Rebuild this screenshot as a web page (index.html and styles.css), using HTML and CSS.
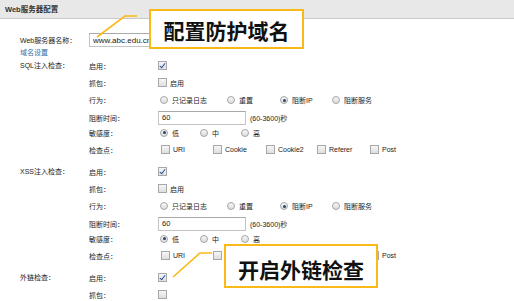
FILE: index.html
```html
<!DOCTYPE html>
<html lang="zh-CN">
<head>
  <meta charset="UTF-8">
  <title>Web服务器配置</title>
  <link rel="stylesheet" href="styles.css">
</head>
<body>
  <div class="page">
    <div class="panel-head">Web服务器配置</div>

    <div class="panel-body">
      <div class="name-row">
        <span class="lbl1">Web服务器名称：</span>
        <input type="text" class="txt url" value="www.abc.edu.cn">
      </div>
      <a class="domain-link" href="#">域名设置</a>

      <!-- SQL -->
      <div class="group">
        <div class="group-title">SQL注入检查：</div>
        <div class="group-rows">
          <div class="row r-enable"><span class="lbl2">启用：</span><span class="cb on"></span></div>
          <div class="row r-capture"><span class="lbl2">抓包：</span><span class="opt"><span class="cb"></span>启用</span></div>
          <div class="row r-action"><span class="lbl2">行为：</span>
            <div class="opts action">
              <span class="opt"><span class="rd"></span>只记录日志</span>
              <span class="opt"><span class="rd"></span>重置</span>
              <span class="opt"><span class="rd on"></span>阻断IP</span>
              <span class="opt"><span class="rd"></span>阻断服务</span>
            </div>
          </div>
          <div class="row r-time"><span class="lbl2">阻断时间：</span><input type="text" class="txt time" value="60"><span class="unit">(60-3600)秒</span></div>
          <div class="row r-sens"><span class="lbl2">敏感度：</span>
            <div class="opts sens">
              <span class="opt"><span class="rd on"></span>低</span>
              <span class="opt"><span class="rd"></span>中</span>
              <span class="opt"><span class="rd"></span>高</span>
            </div>
          </div>
          <div class="row r-points"><span class="lbl2">检查点：</span>
            <div class="opts points">
              <span class="opt"><span class="cb"></span>URI</span>
              <span class="opt"><span class="cb"></span>Cookie</span>
              <span class="opt"><span class="cb"></span>Cookie2</span>
              <span class="opt"><span class="cb"></span>Referer</span>
              <span class="opt"><span class="cb"></span>Post</span>
            </div>
          </div>
        </div>
      </div>

      <!-- XSS -->
      <div class="group">
        <div class="group-title">XSS注入检查：</div>
        <div class="group-rows">
          <div class="row r-enable"><span class="lbl2">启用：</span><span class="cb on"></span></div>
          <div class="row r-capture"><span class="lbl2">抓包：</span><span class="opt"><span class="cb"></span>启用</span></div>
          <div class="row r-action"><span class="lbl2">行为：</span>
            <div class="opts action">
              <span class="opt"><span class="rd"></span>只记录日志</span>
              <span class="opt"><span class="rd"></span>重置</span>
              <span class="opt"><span class="rd on"></span>阻断IP</span>
              <span class="opt"><span class="rd"></span>阻断服务</span>
            </div>
          </div>
          <div class="row r-time"><span class="lbl2">阻断时间：</span><input type="text" class="txt time" value="60"><span class="unit">(60-3600)秒</span></div>
          <div class="row r-sens"><span class="lbl2">敏感度：</span>
            <div class="opts sens">
              <span class="opt"><span class="rd on"></span>低</span>
              <span class="opt"><span class="rd"></span>中</span>
              <span class="opt"><span class="rd"></span>高</span>
            </div>
          </div>
          <div class="row r-points"><span class="lbl2">检查点：</span>
            <div class="opts points">
              <span class="opt"><span class="cb"></span>URI</span>
              <span class="opt"><span class="cb"></span>Cookie</span>
              <span class="opt"><span class="cb"></span>Cookie2</span>
              <span class="opt"><span class="cb"></span>Referer</span>
              <span class="opt"><span class="cb"></span>Post</span>
            </div>
          </div>
        </div>
      </div>

      <!-- 外链 -->
      <div class="group">
        <div class="group-title">外链检查：</div>
        <div class="group-rows">
          <div class="row r-enable"><span class="lbl2">启用：</span><span class="cb on"></span></div>
          <div class="row r-capture"><span class="lbl2">抓包：</span><span class="cb"></span></div>
        </div>
      </div>
    </div>

    <!-- 标注 -->
    <svg class="leaders" width="514" height="301" viewBox="0 0 514 301">
      <polyline points="97,37 125,16 137,16" />
      <polyline points="173,277 200,253 212,253" />
    </svg>
    <div class="callout callout-domain">配置防护域名</div>
    <div class="callout callout-link">开启外链检查</div>
  </div>
</body>
</html>
```

FILE: styles.css
```css
body {
  margin: 0;
  padding: 0;
  background-color: #fff;
  font-family: "Liberation Sans", "Noto Sans CJK SC", sans-serif;
  font-size: 7px;
  color: #222;
}

.page {
  position: relative;
  width: 514px;
  height: 301px;
  overflow: hidden;
}

.panel-head {
  height: 18px;
  line-height: 19px;
  padding-left: 5px;
  background-color: #e8e8e8;
  border-bottom: 1px solid #c9c9c9;
  font-weight: bold;
  font-size: 7.5px;
  color: #333;
}

.panel-body {
  padding: 14px 0 0 20px;
}

.name-row {
  display: flex;
  align-items: center;
  height: 14px;
}

.lbl1 {
  width: 69px;
}

.txt {
  box-sizing: border-box;
  height: 14px;
  margin: 0;
  padding: 0 3px;
  border: 1px solid #c4c4c4;
  border-top-color: #a9a9a9;
  font-family: "Liberation Sans", sans-serif;
  color: #222;
  outline: none;
}

.url {
  width: 90px;
  font-size: 8px;
}

.domain-link {
  display: block;
  height: 10px;
  line-height: 11px;
  color: #2f6ea8;
  text-decoration: none;
}

.group {
  display: flex;
  align-items: flex-start;
  margin-bottom: 3px;
}

.group-title {
  width: 69px;
  height: 17px;
  line-height: 17px;
}

.row {
  display: flex;
  align-items: center;
}

.lbl2 {
  width: 69px;
}

.r-enable, .r-capture, .r-time { height: 17px; }
.r-action { height: 18px; }
.r-sens { height: 13px; }
.r-points { height: 21px; }

.opts {
  display: grid;
  align-items: center;
  margin-left: 2px;
}

.opts.action { grid-template-columns: 67px 53px 52px auto; }
.opts.sens { grid-template-columns: 40px 41px auto; }
.opts.points { margin-left: 3px; grid-template-columns: 52px 53px 51px 53px auto; }

.opt {
  display: inline-flex;
  align-items: center;
  gap: 3px;
}

.opts .opt { gap: 4px; }
.opts.points .opt { gap: 3px; }

.cb {
  box-sizing: border-box;
  position: relative;
  display: inline-block;
  width: 9px;
  height: 9px;
  border: 1px solid #a8a8a8;
  background: linear-gradient(#f6f6f6, #dedede);
}

.cb.on {
  background: linear-gradient(#f2f4f8, #dfe3ea);
}

.cb.on::after {
  content: "";
  position: absolute;
  left: 2px;
  top: 0px;
  width: 2px;
  height: 5px;
  border-right: 1.2px solid #2b4a8a;
  border-bottom: 1.2px solid #2b4a8a;
  transform: rotate(38deg);
}

.rd {
  box-sizing: border-box;
  position: relative;
  display: inline-block;
  width: 8px;
  height: 8px;
  border: 1px solid #a5a5a5;
  border-radius: 50%;
  background: linear-gradient(#f7f7f7, #dcdcdc);
}

.rd.on::after {
  content: "";
  position: absolute;
  left: 1.5px;
  top: 1.5px;
  width: 3px;
  height: 3px;
  border-radius: 50%;
  background-color: #2c3f6e;
}

.time {
  width: 88px;
  font-size: 7.5px;
}

.unit {
  margin-left: 4px;
}

/* 标注框 */
.leaders {
  position: absolute;
  left: 0;
  top: 0;
  pointer-events: none;
}

.leaders polyline {
  fill: none;
  stroke: #fbb917;
  stroke-width: 1.6;
}

.callout {
  position: absolute;
  box-sizing: border-box;
  display: flex;
  justify-content: center;
  align-items: center;
  background-color: #fff;
  border: 2px solid #fbb917;
  font-family: "Noto Sans CJK SC", sans-serif;
  font-weight: bold;
  font-size: 21px;
  color: #111;
}

.callout-domain {
  left: 149px;
  top: 9px;
  width: 155px;
  height: 40px;
  padding-top: 1px;
}

.callout-link {
  left: 224px;
  top: 244px;
  width: 154px;
  height: 44px;
  padding-top: 6px;
}
```
